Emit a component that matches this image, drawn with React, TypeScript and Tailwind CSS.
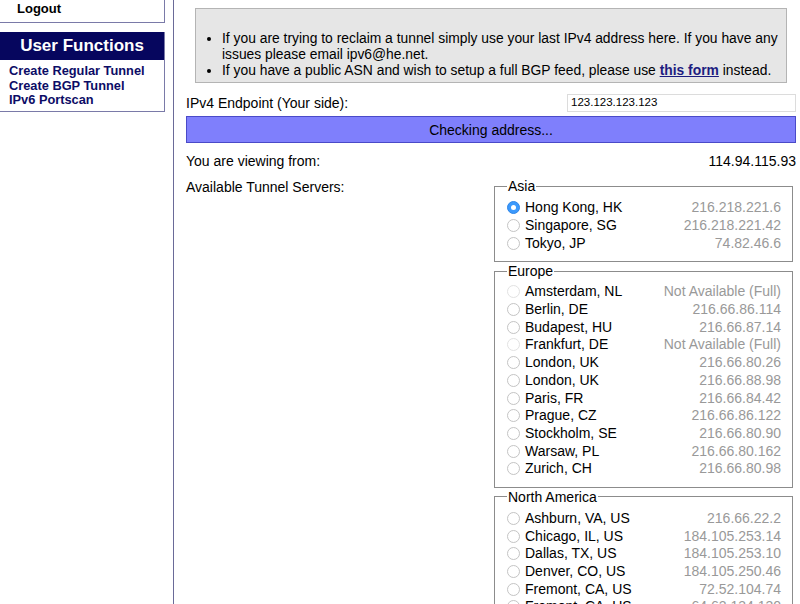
import React from "react";

type Row = { name: string; ip: string; sel?: boolean; dis?: boolean };

const asia: Row[] = [
  { name: "Hong Kong, HK", ip: "216.218.221.6", sel: true },
  { name: "Singapore, SG", ip: "216.218.221.42" },
  { name: "Tokyo, JP", ip: "74.82.46.6" },
];
const europe: Row[] = [
  { name: "Amsterdam, NL", ip: "Not Available (Full)", dis: true },
  { name: "Berlin, DE", ip: "216.66.86.114" },
  { name: "Budapest, HU", ip: "216.66.87.14" },
  { name: "Frankfurt, DE", ip: "Not Available (Full)", dis: true },
  { name: "London, UK", ip: "216.66.80.26" },
  { name: "London, UK", ip: "216.66.88.98" },
  { name: "Paris, FR", ip: "216.66.84.42" },
  { name: "Prague, CZ", ip: "216.66.86.122" },
  { name: "Stockholm, SE", ip: "216.66.80.90" },
  { name: "Warsaw, PL", ip: "216.66.80.162" },
  { name: "Zurich, CH", ip: "216.66.80.98" },
];
const na: Row[] = [
  { name: "Ashburn, VA, US", ip: "216.66.22.2" },
  { name: "Chicago, IL, US", ip: "184.105.253.14" },
  { name: "Dallas, TX, US", ip: "184.105.253.10" },
  { name: "Denver, CO, US", ip: "184.105.250.46" },
  { name: "Fremont, CA, US", ip: "72.52.104.74" },
  { name: "Fremont, CA, US", ip: "64.62.134.130" },
  { name: "Kansas City, MO, US", ip: "216.66.77.230" },
];

function Radio({ sel, dis }: { sel?: boolean; dis?: boolean }) {
  if (sel)
    return (
      <span className="flex h-[13px] w-[13px] items-center justify-center rounded-full bg-[#3b99fc] border border-[#2f86e8]">
        <span className="h-[5px] w-[5px] rounded-full bg-white" />
      </span>
    );
  return (
    <span
      className={
        "h-[13px] w-[13px] rounded-full bg-white border " +
        (dis ? "border-[#e2e2e2]" : "border-[#c4c4c4]")
      }
    />
  );
}

function Group({ title, rows, pt, pb }: { title: string; rows: Row[]; pt: string; pb: string }) {
  return (
    <fieldset className={"border border-[#8c8c8c] pl-[12px] pr-[11px] " + pt + " " + pb}>
      <legend className="ml-[0px] px-[1px] leading-[16px] text-black">{title}</legend>
      {rows.map((r, i) => (
        <div key={i} className="flex h-[17.7px] items-center">
          <Radio sel={r.sel} dis={r.dis} />
          <span className="ml-[5px] text-black">{r.name}</span>
          <span className="ml-auto text-[#999999]">{r.ip}</span>
        </div>
      ))}
    </fieldset>
  );
}

export default function App() {
  return (
    <div
      className="flex h-[604px] w-[800px] overflow-hidden bg-white text-[14px] text-black"
      style={{ fontFamily: '"Liberation Sans", Arial, sans-serif' }}
    >
      {/* Sidebar */}
      <div className="w-[165px] shrink-0">
        <div className="h-[23px] border-b border-r border-[#7a7aa8] pl-[17px] pt-[1px] text-[13px] font-bold leading-[16px]">
          Logout
        </div>
        <div className="mt-[9px] h-[80px] border-b border-r border-[#7a7aa8]">
          <div className="flex h-[28px] items-center justify-center bg-[#06065e] text-[17px] font-bold text-white">
            User Functions
          </div>
          <div className="pl-[9px] pt-[4px] text-[12.8px] font-bold leading-[14.5px] text-[#0c0c66]">
            <div>Create Regular Tunnel</div>
            <div>Create BGP Tunnel</div>
            <div>IPv6 Portscan</div>
          </div>
        </div>
      </div>

      {/* Main */}
      <div className="ml-[8px] w-[1px] shrink-0 bg-[#6a6a98]" />
      <div className="ml-[12px] w-[610px] shrink-0">
        <div className="mx-[9px] mt-[8px] h-[75px] border border-[#b4b4b4] bg-[#e6e6e6] pt-[21px]">
          <ul className="list-disc pl-[26px] pr-0 text-[13.85px] leading-[16px]">
            <li>
              If you are trying to reclaim a tunnel simply use your last IPv4 address here. If you have any
              issues please email ipv6@he.net.
            </li>
            <li>
              If you have a public ASN and wish to setup a full BGP feed, please use{" "}
              <span className="font-bold text-[#1c1c80] underline">this form</span> instead.
            </li>
          </ul>
        </div>

        <div className="mt-[11px] flex h-[18px] items-center">
          <span>IPv4 Endpoint (Your side):</span>
          <div className="ml-auto flex h-[18px] w-[229px] items-center border border-[#dcdcdc] pl-[3px] text-[11.5px]">
            123.123.123.123
          </div>
        </div>

        <div className="mt-[4px] flex h-[27px] items-center justify-center border border-[#4a4ac8] bg-[#7f7ffc] pt-[1px]">
          Checking address...
        </div>

        <div className="mt-[9px] flex h-[18px] items-center">
          <span>You are viewing from:</span>
          <span className="ml-auto">114.94.115.93</span>
        </div>

        <div className="mt-[8px] flex">
          <div className="w-[308px] pt-[1px] leading-[16px]">Available Tunnel Servers:</div>
          <div className="w-[299px]">
            <Group title="Asia" rows={asia} pt="pt-[5px]" pb="pb-[9px]" />
            <div className="h-[1px]" />
            <Group title="Europe" rows={europe} pt="pt-[4px]" pb="pb-[9px]" />
            <div className="h-[1px]" />
            <Group title="North America" rows={na} pt="pt-[5px]" pb="pb-[10px]" />
          </div>
        </div>
      </div>
    </div>
  );
}
